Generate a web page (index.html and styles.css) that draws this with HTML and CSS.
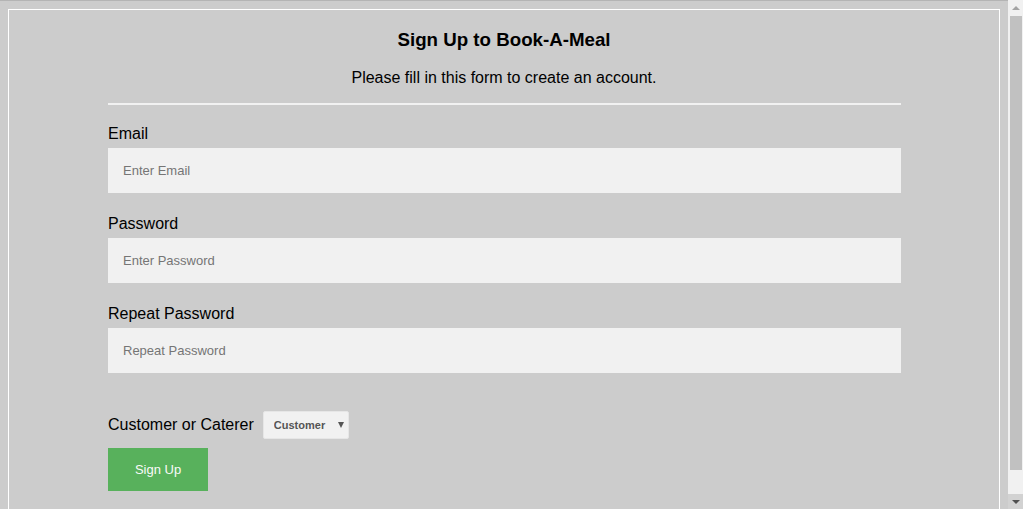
FILE: index.html
```html
<!DOCTYPE html>
<html lang="en">
<head>
<meta charset="utf-8">
<title>Sign Up to Book-A-Meal</title>
<link rel="stylesheet" href="styles.css">
</head>
<body>
<form class="signup">
  <div class="container">
    <h1 class="title">Sign Up to Book-A-Meal</h1>
    <p class="lead">Please fill in this form to create an account.</p>
    <div class="form-body">
      <hr class="divider">
      <label class="field-label" for="email">Email</label>
      <input class="field" id="email" type="text" placeholder="Enter Email">
      <label class="field-label" for="psw">Password</label>
      <input class="field" id="psw" type="password" placeholder="Enter Password">
      <label class="field-label" for="psw-repeat">Repeat Password</label>
      <input class="field" id="psw-repeat" type="password" placeholder="Repeat Password">
      <div class="role-row">
        <label class="role-label" for="role">Customer or Caterer</label>
        <span class="select-wrap">
          <select class="role-select" id="role">
            <option>Customer</option>
            <option>Caterer</option>
          </select>
        </span>
      </div>
      <button class="signup-btn" type="button">Sign Up</button>
    </div>
  </div>
</form>
<div class="scrollbar" aria-hidden="true">
  <span class="sb-btn sb-up"><span class="sb-arrow-up"></span></span>
  <span class="sb-track"><span class="sb-thumb"></span></span>
  <span class="sb-btn sb-down"><span class="sb-arrow-down"></span></span>
</div>
</body>
</html>
```

FILE: styles.css
```css
html {
  background: #cccccc;
  border-top: 1px solid #b4b4b4;
}
body {
  margin: 8px 23px 8px 8px;
  font-family: "Liberation Sans", Arial, sans-serif;
  color: #000;
}
.container {
  border: 1px solid #ffffff;
  background: #cccccc;
  padding: 17px 0 34px;
}
.title {
  margin: 0 0 14px;
  font-size: 18.72px;
  line-height: 26px;
  text-align: center;
}
.lead {
  margin: 0 0 14px;
  font-size: 16px;
  line-height: 22px;
  text-align: center;
}
.form-body {
  margin: 0 98px 0 99px;
}
.divider {
  border: 1px solid #f1f1f1;
  margin: 0 0 20px;
}
.field-label {
  display: block;
  font-size: 16px;
  line-height: 18px;
}
.field {
  display: block;
  box-sizing: border-box;
  width: 100%;
  height: 45px;
  padding: 15px;
  margin: 5px 0 22px;
  border: none;
  background: #f1f1f1;
  font-family: "Liberation Sans", Arial, sans-serif;
  font-size: 13px;
  color: #333;
  outline: none;
}
.field::placeholder {
  color: #757575;
}
.role-row {
  display: flex;
  align-items: center;
  gap: 9px;
  margin-top: 38px;
}
.role-label {
  font-size: 16px;
  line-height: 18px;
}
.select-wrap {
  position: relative;
  display: inline-block;
}
.select-wrap::after {
  content: "";
  position: absolute;
  right: 5px;
  top: 11px;
  border-left: 3.5px solid transparent;
  border-right: 3.5px solid transparent;
  border-top: 6px solid #555;
  pointer-events: none;
}
.role-select {
  appearance: none;
  -webkit-appearance: none;
  box-sizing: border-box;
  width: 86px;
  height: 28px;
  padding: 0 0 0 10px;
  border: 1px solid #e6e6e6;
  border-radius: 2px;
  background: #f1f1f1;
  font-family: "Liberation Sans", Arial, sans-serif;
  font-size: 11px;
  font-weight: bold;
  color: #555;
}
.signup-btn {
  display: block;
  width: 100px;
  height: 43px;
  margin: 9px 0 0;
  padding: 0;
  border: none;
  background: #4caf50;
  color: #fff;
  opacity: 0.9;
  font-family: "Liberation Sans", Arial, sans-serif;
  font-size: 13px;
  cursor: pointer;
}

/* classic browser scrollbar drawn over the right edge */
.scrollbar {
  position: fixed;
  top: 0;
  right: 0;
  bottom: 0;
  width: 15px;
  display: flex;
  flex-direction: column;
  background: #f1f1f1;
}
.sb-btn {
  display: flex;
  align-items: center;
  justify-content: center;
  flex: none;
}
.sb-up {
  height: 16px;
}
.sb-down {
  height: 15px;
  background: #d2d2d2;
}
.sb-arrow-up {
  width: 0;
  height: 0;
  border-left: 4px solid transparent;
  border-right: 4px solid transparent;
  border-bottom: 4px solid #a3a3a3;
}
.sb-arrow-down {
  width: 0;
  height: 0;
  border-left: 4px solid transparent;
  border-right: 4px solid transparent;
  border-top: 4px solid #505050;
}
.sb-track {
  flex: 1;
  display: flex;
  flex-direction: column;
  padding: 0 1px 0 2px;
}
.sb-thumb {
  display: block;
  height: 454px;
  background: #c1c1c1;
}
```
